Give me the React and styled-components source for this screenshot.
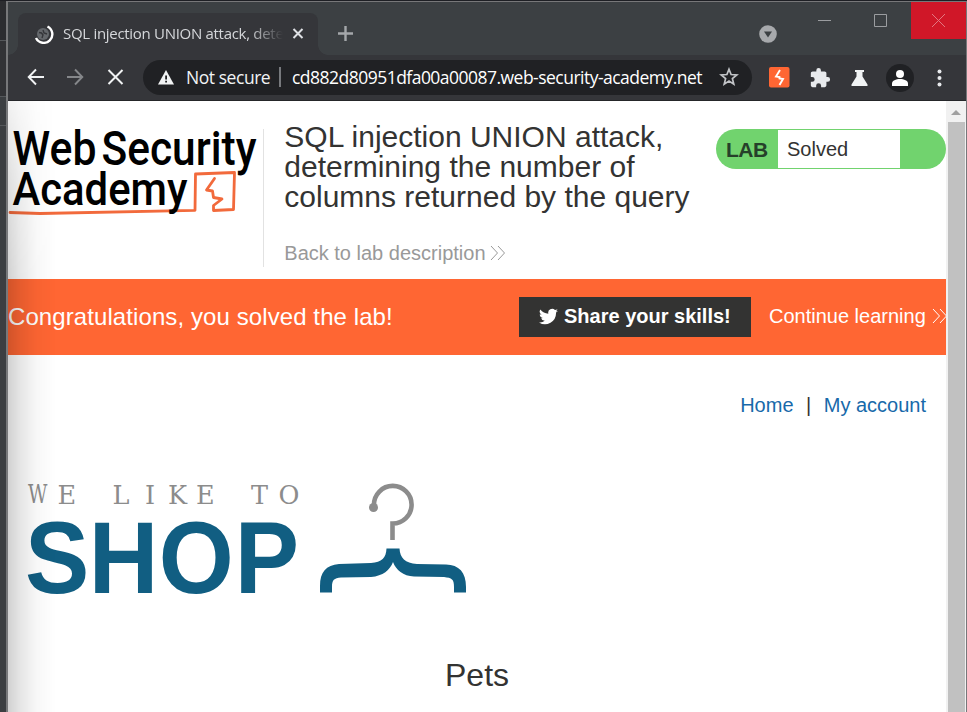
import React from "react";
import styled, { createGlobalStyle } from "styled-components";

const Global = createGlobalStyle`
  *, *::before, *::after { box-sizing: border-box; }
  body { margin: 0; overflow: hidden; background: #fff; font-family: "Liberation Sans", Arial, sans-serif; color: #333332; }
  a { color: inherit; text-decoration: none; }
  svg { display: block; flex: none; }
`;

const Desktop = styled.div`
  width: 967px; height: 712px; display: flex; overflow: hidden;
  background: #fff; border-top: 1px solid #1e1f24;
`;
const BackWindow = styled.div`
  flex: none; width: 8px; height: 711px;
  background: #3b3e41; border-right: 2px solid #77787a;
  display: flex; flex-direction: column;
`;
const BackSegment = styled.div`
  height: ${p => p.$h}px; background: ${p => p.$bg}; border-bottom: 1px solid #55585b;
`;
const Window = styled.div`
  flex: 1; min-width: 0; display: flex; flex-direction: column;
  border-top: 1px solid #777779; border-right: 1px solid #77787a;
`;

const TabStrip = styled.div`
  height: 53px; flex: none; background: #3c4043;
  display: flex; align-items: flex-start; padding-left: 10px;
`;
const Tab = styled.div`
  position: relative; margin-top: 11px; width: 300px; height: 42px;
  background: #35363a; border-radius: 8px 8px 0 0;
  display: flex; align-items: center; padding: 0 13px 0 16px;
  &::before, &::after {
    content: ""; position: absolute; bottom: 0; width: 10px; height: 10px;
  }
  &::before { left: -10px; background: radial-gradient(circle at 0 0, transparent 9.5px, #35363a 10px); }
  &::after { right: -10px; background: radial-gradient(circle at 100% 0, transparent 9.5px, #35363a 10px); }
`;
const TabTitle = styled.div`
  font: 15px/20px "Open Sans", "Noto Sans", sans-serif; letter-spacing: -0.3px;
  color: #d5d7da; width: 220px; margin: -2px 0 0 9px; overflow: hidden; white-space: nowrap;
  -webkit-mask-image: linear-gradient(to right, #000 186px, transparent 220px);
`;
const TabClose = styled.div` margin-left: auto; `;
const NewTab = styled.div` margin: 24px 0 0 20px; `;
const TabSearch = styled.div` margin: 22px 0 0 auto; `;
const WindowButtons = styled.div` display: flex; margin-left: 19px; `;
const WindowButton = styled.div`
  width: ${p => p.$w || 56}px; height: 37px; display: flex; align-items: center; justify-content: center;
  background: ${p => (p.$danger ? "#d01728" : "transparent")};
  margin-left: ${p => (p.$danger ? 3 : 0)}px;
`;

const Toolbar = styled.div`
  height: 46px; flex: none; background: #35363a; border-bottom: 1px solid #252629;
  display: flex; align-items: center; padding: 0 17px 0 18px;
`;
const NavButtons = styled.div`
  display: flex; align-items: center; gap: 21px; width: 117px; flex: none; padding: 0 0 1px 1px;
`;
const Omnibox = styled.div`
  width: 609px; height: 35px; border-radius: 18px; background: #202124; flex: none;
  display: flex; align-items: center; padding: 0 13px 1px 15px;
  font: 17.5px/26px "Open Sans", "Noto Sans", sans-serif; color: #fff; white-space: nowrap;
`;
const Security = styled.div`
  color: #f1f3f4; margin-left: 12px; width: 84px; letter-spacing: -0.45px;
`;
const Divider = styled.div` width: 2px; height: 20px; background: #77797d; margin: 0 11px 0 9px; `;
const Address = styled.div` width: 415px; font-size: 17.5px; letter-spacing: -0.52px; `;
const Extensions = styled.div` display: flex; align-items: center; margin-left: 16px; flex: 1; `;
const Ext = styled.div` flex: none; margin-left: ${p => p.$ml || 0}px; `;

const Viewport = styled.div` flex: 1; min-height: 0; display: flex; position: relative; `;
const SideShade = styled.div`
  position: absolute; inset: 0 auto 0 0; width: 48px; pointer-events: none;
  background: linear-gradient(to right, rgba(0,0,0,.18), rgba(0,0,0,.1) 12px, rgba(0,0,0,.03) 28px, transparent);
  -webkit-mask-image: linear-gradient(to bottom, rgba(0,0,0,.3), rgba(0,0,0,.75) 90px, #000 180px);
`;
const Page = styled.main` width: 938px; flex: none; overflow: hidden; `;
const Scrollbar = styled.div`
  width: 20px; flex: none; background: #f1f1f1; display: flex; flex-direction: column; align-items: center;
`;
const ScrollArrow = styled.div`
  width: 0; height: 0; margin: 9px 0 7px;
  border: 5px solid transparent; border-top: 0; border-bottom-color: #a0a0a0;
`;
const Thumb = styled.div` flex: 1; width: 17px; background: #c1c1c1; `;

const LabHeader = styled.header` height: 178px; display: flex; align-items: flex-start; padding-top: 28px; `;
const Brand = styled.div` width: 256px; height: 138px; border-right: 1px solid #e2e2e2; flex: none; `;
const LabInfo = styled.div` padding-left: 20.3px; width: 452px; flex: none; `;
const LabTitle = styled.h2`
  margin: -7px 0 0; font-weight: 400; font-size: 30px; line-height: 30px; white-space: nowrap; color: #333332;
`;
const BackLink = styled.a`
  display: flex; align-items: center; gap: 4px; margin-top: 29px; height: 24px;
  font-size: 20px; color: #999; white-space: nowrap;
`;
const Status = styled.div`
  width: 230px; height: 40px; display: flex; border-radius: 20px; overflow: hidden;
  background: #71d36e; padding: 1px 0; font-size: 20px; line-height: 39px;
`;
const StatusLabel = styled.div` width: 62px; padding-left: 10px; font-weight: 700; font-size: 21px; letter-spacing: -0.5px; color: #26402a; `;
const StatusValue = styled.div` width: 122px; background: #fff; padding-left: 9px; `;

const Banner = styled.section`
  height: 76px; background: #ff6633; color: #fff; display: flex; align-items: center; white-space: nowrap;
`;
const BannerText = styled.div` font-size: 24px; width: 511px; flex: none; letter-spacing: 0.09px; `;
const ShareButton = styled.a`
  width: 232px; height: 40px; background: #333332; display: flex; align-items: center; flex: none;
  padding: 0 0 2px 20px; gap: 6px; font-size: 20px; font-weight: 700;
`;
const ContinueLink = styled.a` display: flex; align-items: center; gap: 6px; margin-left: 18px; font-size: 20px; padding-bottom: 2px; `;

const TopLinks = styled.nav`
  display: flex; justify-content: flex-end; gap: 12.5px; padding: 38px 20px 0 0;
  font-size: 20px; line-height: 24px; color: #1769aa;
`;
const Pipe = styled.span` color: #333332; `;
const ShopLogo = styled.div` margin: 62px 0 0 15px; `;
const Category = styled.h1`
  margin: 51px 0 0; text-align: center; font-weight: 400; font-size: 32px; line-height: 40px;
`;

const Chevrons = ({ color }) => (
  <svg width="16" height="16" viewBox="0 0 16 16" fill="none" stroke={color} strokeWidth="1">
    <path d="M1 1l6.500 7L1 15M8 1l6.500 7L8 15" />
  </svg>
);

const Spinner = () => (
  <svg width="20" height="20" viewBox="0 0 20 20" fill="none">
    <circle cx="9" cy="10" r="6" fill="#65686c" />
    <path d="M5 8.500l2.500.5 1.500 2-1 3M9 6l1 3 3 1" stroke="#35363a" strokeWidth="1.400" />
    <path d="M13.500 2.500A8.600 8.600 0 1 1 2 14" stroke="#fff" strokeWidth="2.400" />
  </svg>
);

const AcademyLogo = () => (
  <svg width="250" height="94" viewBox="8 129 250 94" fontFamily="Roboto, sans-serif" fontWeight="500" fill="#000">
    <path
      d="M10 212.500L40 213.500L195 210.300L195.500 174L234.500 172.500L233.500 209.500L213.500 210.500L213.500 205.500L222 199L213.500 197.500L212.500 191L206.500 190L214.500 178.500"
      fill="none" stroke="#f26a3c" strokeWidth="2.800" strokeLinejoin="round" strokeLinecap="round"
    />
    <g>
      <text x="12.500" y="165" fontSize="47.500" textLength="84" lengthAdjust="spacingAndGlyphs">Web</text>
      <text x="101.500" y="165" fontSize="47.500" textLength="155" lengthAdjust="spacingAndGlyphs">Security</text>
      <text x="12.500" y="205" fontSize="46.500" textLength="175" lengthAdjust="spacingAndGlyphs">Academy</text>
    </g>
  </svg>
);

const WeLikeToShop = () => (
  <svg width="460" height="125" viewBox="23 479 460 125">
    <g fontFamily="DejaVu Serif, serif" fontSize="25.500" fill="#8c8c8c">
      <text transform="scale(.74 1)" x="38" y="503.500">W</text>
      <text x="57.500 85 112.500 145 168 196 225 251 278.500" y="503.500">E LIKE TO</text>
    </g>
    <text
      transform="scale(.95 1)" x="26.300 93.500 167.200 247.200" y="593"
      fontFamily="Liberation Sans, sans-serif" fontWeight="700" fontSize="101.500" fill="#115e82"
    >SHOP</text>
    <circle cx="373.500" cy="507.500" r="4.500" fill="#8c8c8c" />
    <path d="M374 505A18.800 18.800 0 1 1 392.500 523.500V540" fill="none" stroke="#8c8c8c" strokeWidth="4.600" />
    <path d="M320 592.500V586C320 572 326 565 339 564L371 563C382 562 386 558 386.500 548.500H399.500C400 558 405 563 417 564L446 564.500C459 565 466 572 466 587V592.500H454V587C454 579 452 578 444 577L414 576.500C403 576 396 570 393 562C390 570 383 576 371 577L341 577.500C334 578 332 580 332 587V592.500Z" fill="#115e82" />
  </svg>
);

const Star = () => (
  <svg width="20" height="20" viewBox="0 0 20 20" fill="none" stroke="#c2c4c7" strokeWidth="1.700">
    <path d="M10 2.200l2.100 5.300 5.700.4-4.400 3.700 1.400 5.600L10 14.100l-4.800 3.100 1.400-5.600-4.400-3.700 5.700-.4z" />
  </svg>
);

export default function App() {
  return (
    <>
      <Global />
      <Desktop>
        <BackWindow>
          <BackSegment $h={40} $bg="#2c2d30" />
          <BackSegment $h={56} $bg="#323336" />
          <BackSegment $h={29} $bg="#3b3e41" />
        </BackWindow>
        <Window>
          <TabStrip>
            <Tab>
              <Spinner />
              <TabTitle>SQL injection UNION attack, determining</TabTitle>
              <TabClose>
                <svg width="14" height="14" viewBox="0 0 14 14" stroke="#dfe1e5" strokeWidth="2"><path d="M2.500 2l9 9M11.500 2l-9 9" /></svg>
              </TabClose>
            </Tab>
            <NewTab>
              <svg width="15" height="15" viewBox="0 0 15 15" stroke="#a4a7aa" strokeWidth="2.400"><path d="M7.500 0v15M0 7.500h15" /></svg>
            </NewTab>
            <TabSearch>
              <svg width="18" height="20" viewBox="0 0 18 20"><circle cx="9" cy="10" r="8.800" fill="#a7a9ac" /><path d="M5 7.500h8l-4 6z" fill="#3c4043" /></svg>
            </TabSearch>
            <WindowButtons>
              <WindowButton><svg width="13" height="13" viewBox="0 0 13 13" stroke="#9b9da0"><path d="M0 6.500h13" /></svg></WindowButton>
              <WindowButton><svg width="13" height="13" viewBox="0 0 13 13" stroke="#9b9da0" fill="none"><path d="M.5.500h12v12H.5z" /></svg></WindowButton>
              <WindowButton $danger $w={55}><svg width="13" height="13" viewBox="0 0 13 13" stroke="#e27781"><path d="M0 0l13 13M13 0L0 13" /></svg></WindowButton>
            </WindowButtons>
          </TabStrip>
          <Toolbar>
            <NavButtons>
              <svg width="18" height="18" viewBox="0 0 18 18" fill="none" stroke="#f1f3f4" strokeWidth="1.900"><path d="M17 9H2M9 1.500L1.700 9 9 16.500" /></svg>
              <svg width="18" height="18" viewBox="0 0 18 18" fill="none" stroke="#85878a" strokeWidth="1.900"><path d="M1 9h15M9 1.500L16.300 9 9 16.500" /></svg>
              <svg width="20" height="18" viewBox="0 0 20 18" fill="none" stroke="#f1f3f4" strokeWidth="2"><path d="M3.500 2l14 14M17.500 2l-14 14" /></svg>
            </NavButtons>
            <Omnibox>
              <svg width="16" height="15" viewBox="0 0 16 15"><path d="M8 0l8 14.500H0z" fill="#f1f3f4" /><path d="M7.200 5.500h1.800v4H7.200zM7.200 10.700h1.800v1.800H7.200z" fill="#202124" /></svg>
              <Security>Not secure</Security>
              <Divider />
              <Address>cd882d80951dfa00a00087.web-security-academy.net</Address>
              <Ext $ml={13}><Star /></Ext>
            </Omnibox>
            <Extensions>
              <Ext>
                <svg width="22" height="21" viewBox="0 0 22 21"><rect x="1" width="20.500" height="20.500" rx="2" fill="#ff6633" /><path d="M12 3L8 9.500L11.500 10V11.500L15 12L11.500 18" fill="none" stroke="#fff" strokeWidth="1.900" /></svg>
              </Ext>
              <Ext $ml={18}>
                <svg width="24" height="22" viewBox="0 0 24 24" fill="#e8eaed"><path d="M20.500 11H19V7c0-1.100-.9-2-2-2h-4V3.500a2.500 2.500 0 0 0-5 0V5H4c-1.100 0-2 .9-2 2v3.800h1.500a2.700 2.700 0 0 1 0 5.400H2V20c0 1.100.9 2 2 2h3.800v-1.500a2.700 2.700 0 0 1 5.400 0V22H17c1.100 0 2-.9 2-2v-4h1.500a2.500 2.500 0 0 0 0-5z" /></svg>
              </Ext>
              <Ext $ml={19}>
                <svg width="17" height="16" viewBox="0 0 17 16" fill="#f1f3f4"><path d="M4 0h9v2h-1.500v4.500l5 8V16h-16v-1.500l5-8V2H4z" /></svg>
              </Ext>
              <Ext $ml={18}>
                <svg width="28" height="28" viewBox="0 0 28 28"><circle cx="14" cy="14" r="14" fill="#202124" /><circle cx="14" cy="10" r="4" fill="#fff" /><path d="M6 22v-2.500c0-3 4-4.500 8-4.500s8 1.500 8 4.500V22z" fill="#fff" /></svg>
              </Ext>
              <Ext $ml={23}>
                <svg width="5" height="18" viewBox="0 0 5 18" fill="#e8eaed"><circle cx="2.500" cy="2.500" r="2" /><circle cx="2.500" cy="9" r="2" /><circle cx="2.500" cy="15.500" r="2" /></svg>
              </Ext>
            </Extensions>
          </Toolbar>
          <Viewport>
            <Page>
              <LabHeader>
                <Brand><AcademyLogo /></Brand>
                <LabInfo>
                  <LabTitle>SQL injection UNION attack,<br />determining the number of<br />columns returned by the query</LabTitle>
                  <BackLink>Back to lab description <Chevrons color="#999" /></BackLink>
                </LabInfo>
                <Status><StatusLabel>LAB</StatusLabel><StatusValue>Solved</StatusValue></Status>
              </LabHeader>
              <Banner>
                <BannerText>Congratulations, you solved the lab!</BannerText>
                <ShareButton>
                  <svg width="19" height="19" viewBox="0 0 24 24" fill="#fff"><path d="M24 4.600a10 10 0 0 1-2.800.8 5 5 0 0 0 2.100-2.700 10 10 0 0 1-3.100 1.200 4.900 4.900 0 0 0-8.400 4.500A14 14 0 0 1 1.700 3.100a4.900 4.900 0 0 0 1.500 6.600 4.900 4.900 0 0 1-2.200-.6v.1a4.900 4.900 0 0 0 3.900 4.800 5 5 0 0 1-2.200.1 4.900 4.900 0 0 0 4.600 3.400A9.900 9.900 0 0 1 0 19.500a14 14 0 0 0 21.500-12.400A10 10 0 0 0 24 4.600z" /></svg>
                  Share your skills!
                </ShareButton>
                <ContinueLink>Continue learning <Chevrons color="#fff" /></ContinueLink>
              </Banner>
              <TopLinks><a>Home</a><Pipe>|</Pipe><a>My account</a></TopLinks>
              <ShopLogo><WeLikeToShop /></ShopLogo>
              <Category>Pets</Category>
            </Page>
            <Scrollbar><ScrollArrow /><Thumb /></Scrollbar>
            <SideShade />
          </Viewport>
        </Window>
      </Desktop>
    </>
  );
}
